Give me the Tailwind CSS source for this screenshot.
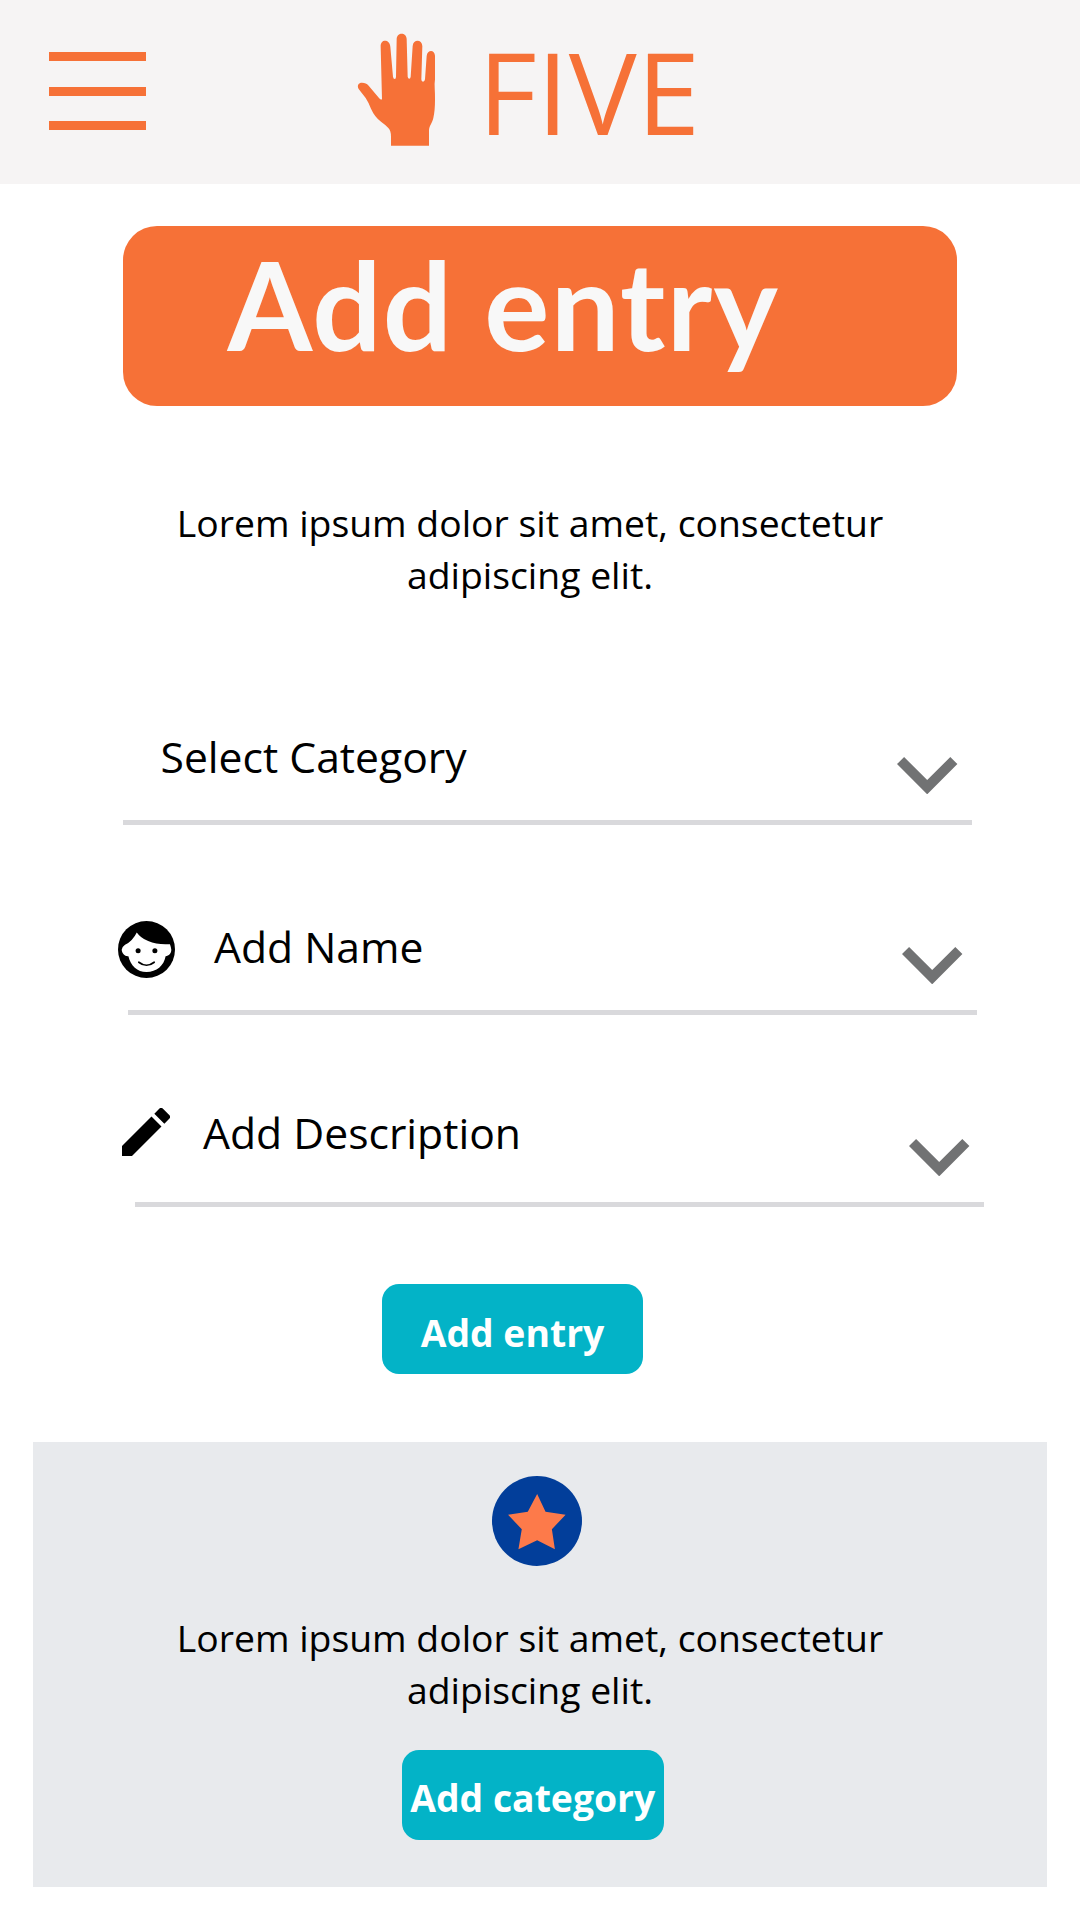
<!DOCTYPE html>
<html lang="en">
<head>
<meta charset="utf-8">
<title>Five – Add entry</title>
<script src="https://cdn.jsdelivr.net/npm/@tailwindcss/browser@4"></script>
</head>
<body class="w-[1080px] h-[1920px] overflow-hidden bg-white text-black font-['Open_Sans',sans-serif]">

<header class="flex h-[184px] bg-[#f6f4f4] text-[#f67137]">
  <button class="ml-[49px] mt-[52px] flex h-[78px] w-[97px] flex-col justify-between" aria-label="Menu">
    <span class="h-[9px] w-full bg-current"></span>
    <span class="h-[9px] w-full bg-current"></span>
    <span class="h-[9px] w-full bg-current"></span>
  </button>
  <svg class="ml-[194px] mt-5 h-[140px] w-[120px]" viewBox="0 0 360 420" fill="currentColor">
    <path d="M153 377V350Q153 332 145 324Q137 315 124 306Q104 291 93 266Q85 246 77 234L56 207C50 196 56 188 66 188C75 188 80 190 86 197L117 234Q122 240 126 238L122 80C121 56 149 57 151 80L159 170Q160 177 164 177Q168 177 168 170L170 57C171 36 199 36 200 57L203 170Q204 176 208 176Q211 176 212 170L218 78C220 57 246 58 247 78L244 178Q244 185 249 185Q254 185 255 178L260 108C262 88 284 88 285 107V178C282 195 286 215 285 240Q285 272 280 294C276 312 267 317 267 332V377Z"/>
  </svg>
  <span class="ml-[18px] text-[114px] leading-[181px]">FIVE</span>
</header>

<main class="flex flex-col">
  <h1 class="ml-[122.5px] mt-[42px] h-[179.5px] w-[834.5px] rounded-[34px] bg-[#f67137] pl-[105px] font-['Lato',sans-serif] text-[122px] font-bold leading-[156px] tracking-[1.3px] text-[#f8f8f8]">Add entry</h1>

  <p class="ml-[130px] mt-[91px] w-[800px] text-center text-[37.33px] leading-[52px]">Lorem ipsum dolor sit amet, consectetur<br>adipiscing elit.</p>

  <form class="flex flex-col pt-[126.5px]">
    <div class="ml-[123px] flex h-[98px] w-[849px] items-start border-b-5 border-[#d9d9dc] pl-[37.5px]">
      <label class="text-[42.67px] leading-[60px]">Select Category</label>
      <svg class="ml-auto mr-[14.5px] mt-[30px] h-[37.3px] w-[60.4px]" viewBox="6 8.59 12 7.41" fill="#717273"><path d="M16.59 8.59 12 13.17 7.41 8.59 6 10l6 6 6-6z"/></svg>
    </div>
    <div class="ml-[128px] mt-[92px] flex h-[98px] w-[849px] items-start border-b-5 border-[#d9d9dc]">
      <svg class="-ml-[10.5px] mt-1 h-[57px] w-[57px]" viewBox="53 663 170 170">
        <circle cx="138" cy="748" r="85" fill="#000"/>
        <path fill="#fff" d="M109 697Q120 713 143 723Q172 735 208 732Q211 740 212 749C212 760 205 767 195 768C190 796 168 815 138 815C110 815 91 797 84 768C73 769 65 760 64 749Q66 739 74 734Q97 722 109 697Z"/>
        <circle cx="113" cy="752" r="7.500"/>
        <circle cx="163" cy="752" r="7.500"/>
        <path d="M115 786Q138 804 161 786" fill="none" stroke="#000" stroke-width="5" stroke-linecap="round"/>
      </svg>
      <label class="ml-[39.5px] text-[42.67px] leading-[60px]">Add Name</label>
      <svg class="ml-auto mr-[14.5px] mt-[30px] h-[37.3px] w-[60.4px]" viewBox="6 8.59 12 7.41" fill="#717273"><path d="M16.59 8.59 12 13.17 7.41 8.59 6 10l6 6 6-6z"/></svg>
    </div>
    <div class="ml-[135px] mt-[88px] flex h-[104px] w-[849px] items-start border-b-5 border-[#d9d9dc]">
      <svg class="-ml-[13px] mt-[5px] size-12" viewBox="3 3 18 18"><path d="M3 17.250V21h3.750L17.810 9.940l-3.750-3.750L3 17.250zM20.710 7.040a1 1 0 0 0 0-1.410l-2.340-2.340a1 1 0 0 0-1.410 0l-1.830 1.830 3.750 3.750 1.830-1.830z"/></svg>
      <label class="ml-[33px] text-[42.67px] leading-[60px]">Add Description</label>
      <svg class="ml-auto mr-[14.5px] mt-[36px] h-[37.3px] w-[60.4px]" viewBox="6 8.59 12 7.41" fill="#717273"><path d="M16.59 8.59 12 13.17 7.41 8.59 6 10l6 6 6-6z"/></svg>
    </div>
    <button type="button" class="ml-[382px] mt-[77px] flex h-[90px] w-[261px] items-center justify-center rounded-[17px] bg-[#03b3c7] pt-[7px] text-[37.33px] font-bold text-white">Add entry</button>
  </form>

  <section class="ml-[33px] mt-[68px] flex h-[445px] w-[1014px] flex-col bg-[#e8eaed]">
    <svg class="ml-[458.5px] mt-[34px] size-[90px]" viewBox="395 648 269 269">
      <circle cx="529.500" cy="782.500" r="134.500" fill="#023e9a"/>
      <path fill="#fd7a4a" d="M530 702 555 755 615 764 574 807 583 867 530 840 474 867 484 807 443 764 502 755Z"/>
    </svg>
    <p class="ml-[97px] mt-[45.5px] w-[800px] text-center text-[37.33px] leading-[52px]">Lorem ipsum dolor sit amet, consectetur<br>adipiscing elit.</p>
    <button type="button" class="ml-[369px] mt-[34px] flex h-[90px] w-[261.5px] items-center justify-center whitespace-nowrap rounded-[17px] bg-[#03b3c7] pt-[7px] text-[37.33px] font-bold text-white">Add category</button>
  </section>
</main>
</body>
</html>
